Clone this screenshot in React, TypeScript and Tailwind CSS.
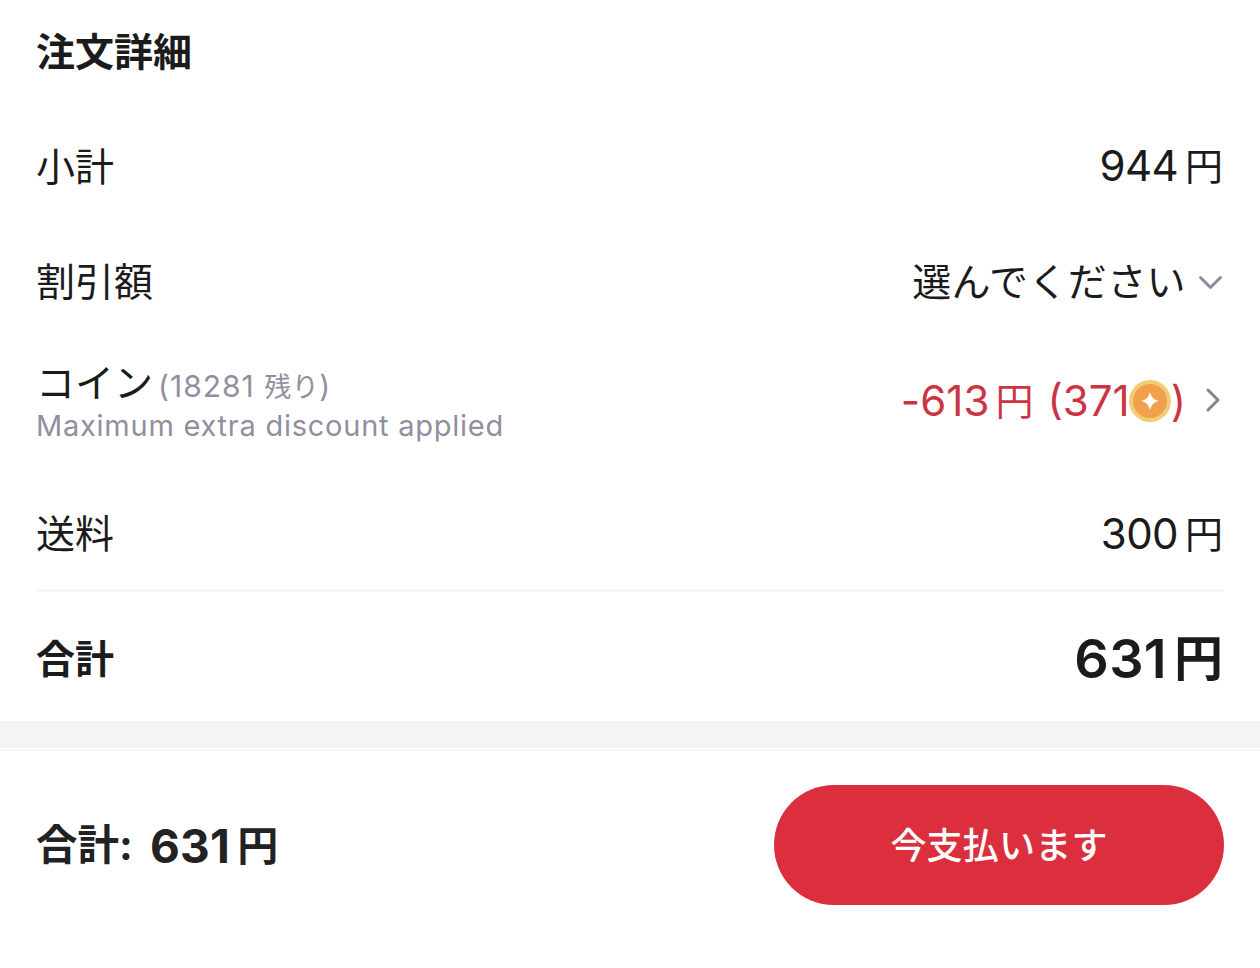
import type { ReactNode } from 'react';

function Row({ label, className, children }: { label: ReactNode; className: string; children: ReactNode }) {
  return (
    <div className={`flex items-center justify-between ${className}`}>
      <div>{label}</div>
      <div className="flex items-center">{children}</div>
    </div>
  );
}

function Price({ value }: { value: string }) {
  return (
    <>
      <span className="text-[42px] tracking-[-0.6px]">{value}</span>
      <span className="mr-px ml-[7px] text-[38px]">円</span>
    </>
  );
}

function Coin() {
  return (
    <svg className="-ml-px" width="42" height="42" viewBox="0 0 42 42">
      <circle cx="21" cy="21" r="21" fill="#f1ce74" />
      <circle cx="21" cy="21" r="17" fill="#f1a04c" />
      <path d="M21 12C22.5 17.5 24.5 19.5 30 21C24.5 22.5 22.5 24.5 21 30C19.5 24.5 17.5 22.5 12 21C17.5 19.5 19.5 17.5 21 12Z" fill="#fff" />
    </svg>
  );
}

export default function App() {
  return (
    <div className="flex h-[968px] w-[1260px] flex-col bg-white font-['Inter','Noto_Sans_CJK_JP',sans-serif] text-[39px] leading-none text-[#1b1b1b]">
      <div className="flex h-[721px] flex-col px-9">
        <h2 className="flex h-[102px] items-center font-bold">注文詳細</h2>
        <Row label="小計" className="h-[128px]">
          <Price value="944" />
        </Row>
        <Row label="割引額" className="h-[102px]">
          <span className="tracking-[0.4px]">選んでください</span>
          <svg
            className="mt-0.5 ml-3"
            width="26"
            height="26"
            viewBox="0 0 26 26"
            fill="none"
            stroke="#8d8c9c"
            strokeWidth="3"
            strokeLinecap="round"
            strokeLinejoin="round"
          >
            <path d="M2.5 8.5L12.5 18.5L22.5 8.5" />
          </svg>
        </Row>
        <Row
          label={
            <>
              <div className="flex items-baseline">
                コイン
                <span className="ml-[5px] text-[30px] tracking-[1px] text-[#918f9f]">
                  (18281 <span className="text-[27px] tracking-[0.5px]">残り</span>)
                </span>
              </div>
              <div className="mt-[9px] text-[29px] tracking-[0.75px] text-[#918f9f]">Maximum extra discount applied</div>
            </>
          }
          className="h-[136px] pt-0.5"
        >
          <div className="flex items-center text-[#cd3442]">
            <span className="text-[42px] tracking-[0.1px]">-613</span>
            <span className="ml-1.5 text-[38px]">円</span>
            <span className="ml-[14px] text-[42px]">(371</span>
            <Coin />
            <span className="text-[42px]">)</span>
          </div>
          <svg
            className="-mt-0.5 ml-4"
            width="22"
            height="26"
            viewBox="0 0 22 26"
            fill="none"
            stroke="#85858f"
            strokeWidth="3"
            strokeLinecap="round"
            strokeLinejoin="round"
          >
            <path d="M6 3L16 13L6 23" />
          </svg>
        </Row>
        <Row label="送料" className="h-[124px] border-b-[3px] border-[#f4f4f4] pt-2.5">
          <Price value="300" />
        </Row>
        <Row label="合計" className="h-[129px] pt-1 font-bold">
          <span className="text-[54px] font-semibold tracking-[0.3px]">631</span>
          <span className="mr-px ml-[7px] text-[49px]">円</span>
        </Row>
      </div>
      <div className="h-[27px] bg-[#f4f4f4]" />
      <div className="mt-px h-0.5 bg-[#f4f4f4]" />
      <div className="flex h-[188px] items-center justify-between px-9 text-[#222]">
        <div className="flex items-center pt-0.5 text-[41.5px] font-bold">
          合計:
          <span className="ml-[17px] text-[46px] tracking-[0.3px]">631</span>
          <span className="ml-[7px] text-[41px]">円</span>
        </div>
        <button className="h-[120px] w-[450px] rounded-full bg-[#dc2f3d] pt-0.5 text-[36px] font-medium tracking-[0.2px] text-white">
          今支払います
        </button>
      </div>
    </div>
  );
}
